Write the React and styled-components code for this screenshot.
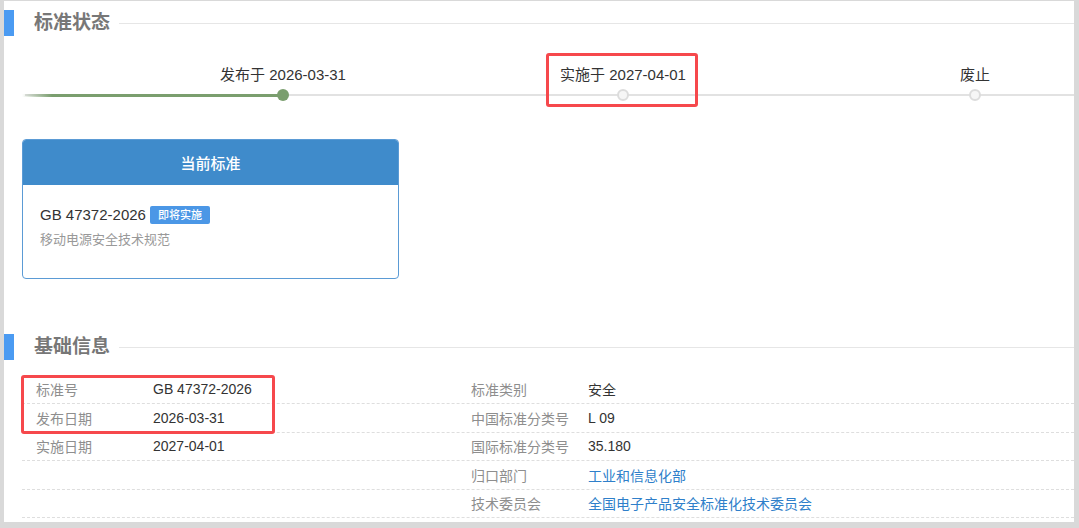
import React from 'react';
import styled, { createGlobalStyle } from 'styled-components';

const GlobalStyle = createGlobalStyle`
  html, body {
    margin: 0;
    padding: 0;
    background: #d9d9d9;
    font-family: "Liberation Sans", "Noto Sans CJK SC", sans-serif;
    overflow: hidden;
  }
`;

const Page = styled.div`
  position: relative;
  margin: 1px 0 0 4px;
  width: 1070px;
  height: 521px;
  background: #fff;
  overflow: hidden;
`;

const Heading = styled.div`
  display: flex;
  align-items: center;
  height: 26px;
  margin-top: ${(p) => p.$top}px;
`;

const HeadBar = styled.span`
  width: 10px;
  height: 100%;
  background: #4b9bf2;
`;

const HeadTitle = styled.h2`
  margin: 0 0 0 20px;
  font-size: 19px;
  font-weight: 700;
  color: #777;
  line-height: 26px;
`;

const HeadLine = styled.span`
  flex: 1;
  height: 1px;
  margin-left: 9px;
  background: #e6e6e6;
`;

const Body = styled.div`
  padding-left: 18px;
`;

const Timeline = styled.div`
  position: relative;
  display: flex;
  margin-top: 29px;
  padding-left: 91px;

  &::before {
    content: '';
    position: absolute;
    left: 3px;
    right: 0;
    top: 29px;
    height: 2px;
    background: #e2e2e2;
  }

  &::after {
    content: '';
    position: absolute;
    left: 0;
    width: 261px;
    top: 28.5px;
    height: 3px;
    background: linear-gradient(to right, rgba(122, 158, 110, 0) 0, #7a9e6e 30px, #7a9e6e 100%);
  }
`;

const Step = styled.div`
  position: relative;
  z-index: 1;
  flex: 0 0 ${(p) => p.$w}px;
  display: flex;
  flex-direction: column;
  align-items: center;
`;

const StepLabel = styled.div`
  font-size: 15px;
  line-height: 20px;
  color: #333;
  white-space: nowrap;
`;

const Dot = styled.span`
  margin-top: 4px;
  box-sizing: border-box;
  width: 12px;
  height: 12px;
  border-radius: 50%;
  background: ${(p) => (p.$done ? '#7a9e6e' : '#f6f6f6')};
  border: ${(p) => (p.$done ? 'none' : '2px solid #dcdcdc')};
`;

const Card = styled.div`
  box-sizing: border-box;
  margin-top: 38px;
  width: 377px;
  height: 140px;
  border: 1px solid #5b9bd5;
  border-radius: 4px;
  overflow: hidden;
`;

const CardHead = styled.div`
  height: 45px;
  display: flex;
  align-items: center;
  justify-content: center;
  background: #3f8bcb;
  color: #fff;
  font-size: 15px;
  font-weight: 500;
`;

const CardBody = styled.div`
  padding: 20px 17px 0;
`;

const CodeRow = styled.div`
  display: flex;
  align-items: center;
  font-size: 15px;
  line-height: 20px;
  color: #333;
`;

const Badge = styled.span`
  margin-left: 4px;
  height: 18px;
  padding: 0 8px;
  display: inline-flex;
  align-items: center;
  border-radius: 2px;
  background: #4b97e6;
  color: #fff;
  font-size: 11px;
  font-weight: 500;
`;

const CardSub = styled.div`
  margin-top: 6px;
  font-size: 13px;
  line-height: 18px;
  color: #999;
`;

const Table = styled.div`
  margin-top: 15.5px;
`;

const Row = styled.div`
  display: grid;
  grid-template-columns: 131px 304px 131px 1fr;
  align-items: center;
  height: 27.5px;
  border-bottom: 1px dashed #dedede;
  font-size: 14px;
`;

const Label = styled.span`
  padding-left: 14px;
  color: #8e8e8e;
  white-space: nowrap;
`;

const Value = styled.span`
  color: ${(p) => (p.$link ? '#2f7fca' : '#333')};
  white-space: nowrap;
`;

const Mark = styled.div`
  position: absolute;
  box-sizing: border-box;
  left: ${(p) => p.$x}px;
  top: ${(p) => p.$y}px;
  width: ${(p) => p.$w}px;
  height: ${(p) => p.$h}px;
  border: 3px solid #f6484c;
  border-radius: 3px;
  pointer-events: none;
`;

const steps = [
  { label: '发布于 2026-03-31', w: 340, done: true },
  { label: '实施于 2027-04-01', w: 340 },
  { label: '废止', w: 364 },
];

const rows = [
  ['标准号', 'GB 47372-2026', '标准类别', '安全'],
  ['发布日期', '2026-03-31', '中国标准分类号', 'L 09'],
  ['实施日期', '2027-04-01', '国际标准分类号', '35.180'],
  ['', '', '归口部门', '工业和信息化部', true],
  ['', '', '技术委员会', '全国电子产品安全标准化技术委员会', true],
];

const App = () => {
  return (
    <>
      <GlobalStyle />
      <Page>
        <Heading $top={9}>
          <HeadBar />
          <HeadTitle>标准状态</HeadTitle>
          <HeadLine />
        </Heading>
        <Body>
          <Timeline>
            {steps.map((s) => (
              <Step key={s.label} $w={s.w}>
                <StepLabel>{s.label}</StepLabel>
                <Dot $done={s.done} />
              </Step>
            ))}
          </Timeline>
          <Card>
            <CardHead>当前标准</CardHead>
            <CardBody>
              <CodeRow>
                GB 47372-2026
                <Badge>即将实施</Badge>
              </CodeRow>
              <CardSub>移动电源安全技术规范</CardSub>
            </CardBody>
          </Card>
        </Body>
        <Heading $top={55}>
          <HeadBar />
          <HeadTitle>基础信息</HeadTitle>
          <HeadLine />
        </Heading>
        <Body>
          <Table>
            {rows.map((r, i) => (
              <Row key={i}>
                <Label>{r[0]}</Label>
                <Value>{r[1]}</Value>
                <Label>{r[2]}</Label>
                <Value $link={r[4]}>{r[3]}</Value>
              </Row>
            ))}
          </Table>
        </Body>
        <Mark $x={542} $y={52} $w={152} $h={54} />
        <Mark $x={17} $y={374} $w={254} $h={59} />
      </Page>
    </>
  );
};

export default App;
